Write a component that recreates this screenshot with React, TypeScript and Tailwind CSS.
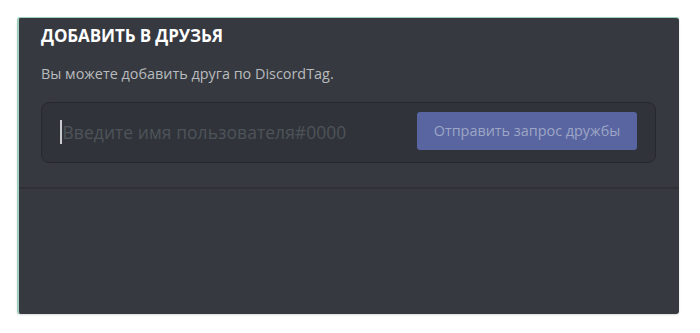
import React from 'react';

const App: React.FC = () => {
  return (
    <div className="w-[700px] h-[333px] bg-white pt-[17px] pl-[17px]" style={{ fontFamily: '"Open Sans", "Noto Sans", sans-serif' }}>
      <div className="w-[662px] h-[297px] bg-[#36393f] border-l-2 border-t border-[#9fcfbf] rounded-[3px] shadow-[0_1px_2px_rgba(0,0,0,0.15)] flex flex-col">
        {/* Header section */}
        <div className="px-[22px] pt-[6px] pb-[24px] border-b-2 border-[#2f3136]">
          <h2 className="text-[17px] font-bold text-white leading-[24px] tracking-[-0.1px]">ДОБАВИТЬ В ДРУЗЬЯ</h2>
          <p className="mt-[17px] text-[14.4px] text-[#b9bbbe] leading-[18px]">
            Вы можете добавить друга по DiscordTag.
          </p>
          <div className="mt-[19px] w-[615px] h-[61px] bg-[#303339] border border-[#26282c] rounded-[8px] flex items-center pl-[18px] pr-[18px]">
            <div className="flex items-center flex-1">
              <span className="w-[1.5px] h-[24px] bg-[#c8cacd] mr-[1px]" />
              <span className="text-[17.4px] text-[#4e535a] tracking-[0.1px]">Введите имя пользователя#0000</span>
            </div>
            <button className="w-[220px] h-[38px] mb-[3px] rounded-[3px] bg-[#5865a0] text-[#9ea5c6] text-[14.4px] leading-none">
              Отправить запрос дружбы
            </button>
          </div>
        </div>
        <div className="flex-1" />
      </div>
    </div>
  );
};

export default App;
